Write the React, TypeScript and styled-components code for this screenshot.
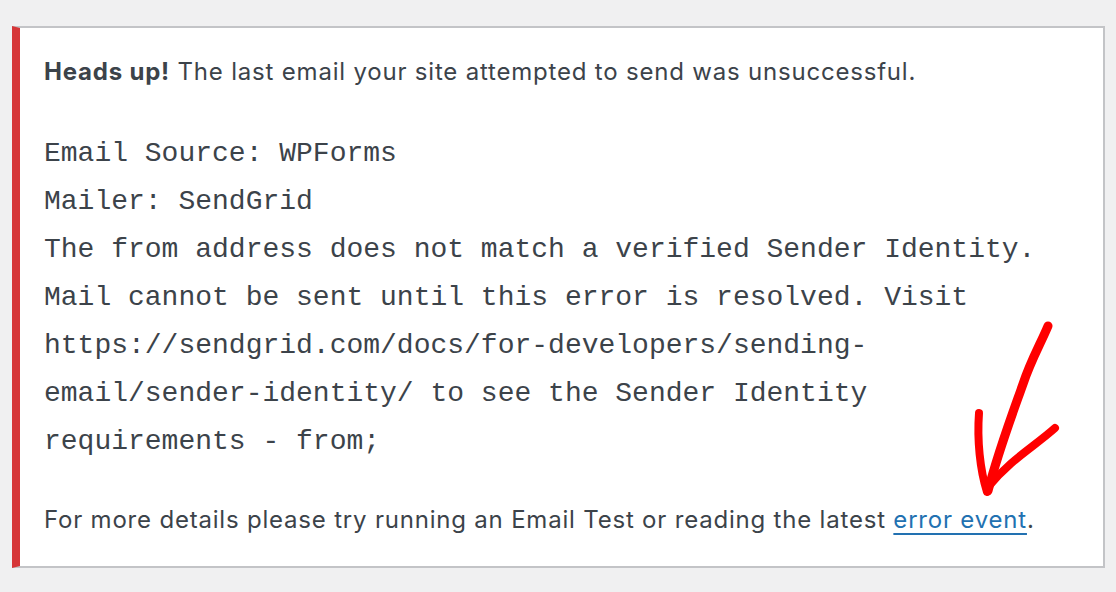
import React from "react";
import styled, { createGlobalStyle } from "styled-components";

const Global = createGlobalStyle`
  html, body { margin: 0; padding: 0; background: #f0f0f1; }
  body { width: 1116px; height: 592px; overflow: hidden; }
`;

const Page = styled.div`
  padding: 26px 11px 0 12px;
`;

const Notice = styled.div`
  position: relative;
  background: #fff;
  border: 2px solid #c3c4c7;
  border-left: 8px solid #d63638;
  padding: 0 24px 28px 24px;
  color: #3c434a;
  font-family: Inter, "Liberation Sans", Arial, sans-serif;
`;

const Para = styled.p<{ $top: number }>`
  margin: ${(p) => p.$top}px 0 0;
  font-size: 24px;
  line-height: 36px;
  letter-spacing: 0.8px;
`;

const Strong = styled.strong`
  font-weight: 700;
`;

const Mono = styled.div`
  margin-top: 40px;
  font-family: "Liberation Mono", "Courier New", monospace;
  font-size: 28px;
  line-height: 48px;
  white-space: pre;
`;

const Link = styled.a`
  color: #2271b1;
  text-decoration: underline;
  text-underline-offset: 5px;
  text-decoration-thickness: 2px;
`;

const Arrow = styled.svg`
  position: absolute;
  left: 945px;
  top: 287px;
  width: 100px;
  height: 190px;
  overflow: visible;
`;

const lines = [
  "Email Source: WPForms",
  "Mailer: SendGrid",
  "The from address does not match a verified Sender Identity.",
  "Mail cannot be sent until this error is resolved. Visit",
  "https://sendgrid.com/docs/for-developers/sending-",
  "email/sender-identity/ to see the Sender Identity",
  "requirements - from;",
];

export default function App() {
  return (
    <>
      <Global />
      <Page>
        <Notice>
          <Para $top={26}>
            <Strong>Heads up!</Strong> The last email your site attempted to send was unsuccessful.
          </Para>
          <Mono>{lines.join("\n")}</Mono>
          <Para $top={36}>
            For more details please try running an Email Test or reading the latest{" "}
            <Link href="#">error event</Link>.
          </Para>
          <Arrow viewBox="965 315 100 190">
            <g fill="none" stroke="#ff0000" strokeLinecap="round" strokeLinejoin="round">
              <path strokeWidth={9} d="M1048 326 C1040 345, 1031 360, 1023 384 C1012 415, 998 452, 988 491" />
              <path strokeWidth={8} d="M979 413 C977 440, 980 470, 987 492" />
              <path strokeWidth={8} d="M1055 428 C1035 446, 1010 460, 989 486" />
            </g>
          </Arrow>
        </Notice>
      </Page>
    </>
  );
}
